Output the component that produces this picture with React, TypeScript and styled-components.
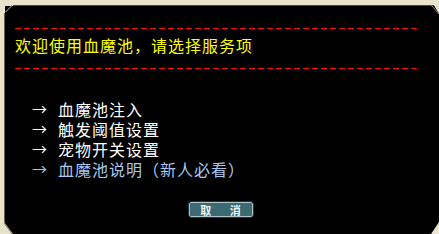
import styled, { createGlobalStyle } from 'styled-components'

const GlobalStyle = createGlobalStyle`
	html, body {
		margin: 0;
		padding: 0;
		background: #000;
	}
	body {
		font-family: "Noto Sans CJK SC", "Liberation Sans", sans-serif;
	}
`

const BEIGE = '#e9e3cc'

const Frame = styled.div`
	position: relative;
	width: 439px;
	height: 234px;
	box-sizing: border-box;
	border-top: 5px solid ${BEIGE};
	border-left: 4px solid ${BEIGE};
	background: #000;
	overflow: hidden;
`

const Panel = styled.div`
	display: flex;
	flex-direction: column;
	height: 100%;
	box-sizing: border-box;
	border-top: 1px solid #4a4434;
	border-left: 1px solid #6a6250;
	padding: 22px 0 0 10px;
`

const Dashes = styled.div`
	width: 404px;
	height: 1px;
	background: repeating-linear-gradient(to right, #ff1010 0 6px, transparent 6px 9px);
`

const Title = styled.div`
	color: #ffff00;
	font-size: 16px;
	line-height: 20px;
	letter-spacing: 1px;
	margin: 6px 0 13px;
	white-space: nowrap;
`

const Menu = styled.ul`
	list-style: none;
	margin: 30px 0 0;
	padding: 0 0 0 17px;
	display: flex;
	flex-direction: column;
`

const Item = styled.li<{ $hint?: boolean }>`
	display: flex;
	align-items: center;
	height: 20px;
	line-height: 20px;
	color: ${(p) => (p.$hint ? '#a8c8f0' : '#ffffff')};
	font-size: 16px;
	letter-spacing: 1px;
	white-space: nowrap;
	cursor: pointer;
	.arrow {
		width: 26px;
		font-size: 15px;
	}
`

const Footer = styled.div`
	display: flex;
	justify-content: center;
	margin-top: 23px;
	padding-right: 12px;
`

const CancelButton = styled.button`
	width: 64px;
	height: 15px;
	padding: 0;
	box-sizing: border-box;
	background: #3b6a72;
	border: 1px solid #a9c9cc;
	outline: 1px solid #1c3338;
	border-radius: 2px;
	color: #f4f4f4;
	font-family: "Noto Sans CJK SC", sans-serif;
	font-size: 11px;
	font-weight: 700;
	line-height: 12px;
	letter-spacing: 1px;
	word-spacing: 14px;
`

const Corner = styled.svg<{ $pos: 'tl' | 'tr' | 'bl' | 'br' }>`
	position: absolute;
	${(p) => (p.$pos === 'tl' ? 'top: -5px; left: -4px;' : '')}
	${(p) => (p.$pos === 'tr' ? 'top: -5px; right: 0;' : '')}
	${(p) => (p.$pos === 'bl' ? 'bottom: 0; left: -4px;' : '')}
	${(p) => (p.$pos === 'br' ? 'bottom: 0; right: 0;' : '')}
`

const items = ['血魔池注入', '触发阈值设置', '宠物开关设置']

export default function App() {
	return (
		<>
			<GlobalStyle />
			<Frame>
				<Panel>
					<Dashes />
					<Title>欢迎使用血魔池，请选择服务项</Title>
					<Dashes />
					<Menu>
						{items.map((label) => (
							<Item key={label}>
								<span className="arrow">→</span>
								{label}
							</Item>
						))}
						<Item $hint>
							<span className="arrow">→</span>
							血魔池说明（新人必看）
						</Item>
					</Menu>
					<Footer>
						<CancelButton>取 消</CancelButton>
					</Footer>
				</Panel>
				<Corner $pos="tl" width="13" height="13" viewBox="0 0 13 13">
					<rect width="13" height="13" fill={BEIGE} />
					<path d="M1 1 H7 L1 7 Z" fill="#b8b09a" />
					<path d="M12 5 L5 12" stroke="#8a826c" strokeWidth="1" />
					<rect x="5" y="6" width="8" height="7" fill="#000" />
					<path d="M5 12 L12 5 L12 6 L6 12 Z" fill="#cfc8b0" />
				</Corner>
				<Corner $pos="tr" width="8" height="14" viewBox="0 0 8 14">
					<path d="M0 0 H8 V14 Z" fill={BEIGE} />
					<path d="M0 5 L8 14" stroke="#8a826c" strokeWidth="1" />
				</Corner>
				<Corner $pos="bl" width="13" height="12" viewBox="0 0 13 12">
					<path d="M0 0 H4 L13 12 H0 Z" fill={BEIGE} />
					<path d="M4 1 L12 12" stroke="#8a826c" strokeWidth="1" />
				</Corner>
				<Corner $pos="br" width="8" height="12" viewBox="0 0 8 12">
					<path d="M8 0 V12 H0 Z" fill={BEIGE} />
				</Corner>
			</Frame>
		</>
	)
}
